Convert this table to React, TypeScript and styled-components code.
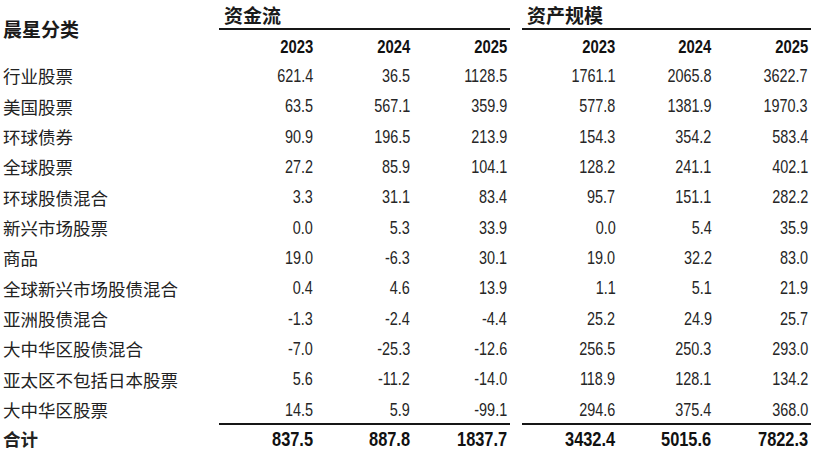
import React from "react";
import styled, { createGlobalStyle } from "styled-components";

const GlobalStyle = createGlobalStyle`
  html, body { margin: 0; padding: 0; background: #ffffff; }
  body { width: 815px; height: 463px; overflow: hidden; }
`;

const COLS = "219px repeat(3, 97px) 12px repeat(3, 96.3px)";
const NUM_FONT = `"Liberation Sans", Arial, sans-serif`;
const CJK_FONT = `"Noto Sans CJK SC", "Noto Sans", sans-serif`;

const Table = styled.div`
  display: flex;
  flex-direction: column;
  width: 815px;
  color: #161616;
`;

const Header = styled.div`
  display: grid;
  grid-template-columns: ${COLS};
  grid-template-rows: 30px 31px;
`;

const CornerTitle = styled.div`
  grid-row: 1 / 3;
  grid-column: 1;
  align-self: center;
  padding: 0 0 5px 3px;
  font-family: ${CJK_FONT};
  font-weight: 700;
  font-size: 19px;
  line-height: 1;
  color: #1a1a1a;
`;

const GroupTitle = styled.div<{ $col: string }>`
  grid-row: 1;
  grid-column: ${(p) => p.$col};
  display: flex;
  align-items: center;
  padding-left: 5px;
  border-bottom: 2px solid #161616;
  font-family: ${CJK_FONT};
  font-weight: 700;
  font-size: 19px;
  line-height: 1;
  color: #1a1a1a;
`;

const YearCell = styled.div<{ $col: number }>`
  grid-row: 2;
  grid-column: ${(p) => p.$col};
  display: flex;
  align-items: center;
  justify-content: flex-end;
  padding: 2px 3px 0 0;
  font-family: ${NUM_FONT};
  font-weight: 700;
  font-size: 19px;
  color: #111;
`;

const Narrow = styled.span<{ $scale?: number }>`
  display: inline-block;
  transform: scaleX(${(p) => p.$scale ?? 0.78});
  transform-origin: right center;
  white-space: nowrap;
`;

const Row = styled.div<{ $total?: boolean }>`
  display: grid;
  grid-template-columns: ${COLS};
  height: ${(p) => (p.$total ? "30px" : "30.33px")};
  margin-top: ${(p) => (p.$total ? "-2px" : "0")};
`;

const Label = styled.div<{ $bold?: boolean }>`
  grid-column: 1;
  display: flex;
  align-items: center;
  padding-left: 3px;
  padding-top: ${(p) => (p.$bold ? "2px" : "0")};
  font-family: ${CJK_FONT};
  font-weight: ${(p) => (p.$bold ? 700 : 400)};
  font-size: 17.5px;
  line-height: 1;
  color: #222;
  white-space: nowrap;
`;

const Num = styled.div<{ $bold?: boolean; $line?: boolean; $col: number }>`
  grid-column: ${(p) => p.$col};
  display: flex;
  align-items: center;
  justify-content: flex-end;
  padding-right: 3px;
  padding-top: ${(p) => (p.$line ? "2px" : "0")};
  border-top: ${(p) => (p.$line ? "2px solid #161616" : "none")};
  font-family: ${NUM_FONT};
  font-weight: ${(p) => (p.$bold ? 700 : 400)};
  font-size: ${(p) => (p.$bold ? "20px" : "18.5px")};
  color: ${(p) => (p.$bold ? "#111" : "#262626")};
`;

const rows: [string, string[]][] = [
  ["行业股票", ["621.4", "36.5", "1128.5", "1761.1", "2065.8", "3622.7"]],
  ["美国股票", ["63.5", "567.1", "359.9", "577.8", "1381.9", "1970.3"]],
  ["环球债券", ["90.9", "196.5", "213.9", "154.3", "354.2", "583.4"]],
  ["全球股票", ["27.2", "85.9", "104.1", "128.2", "241.1", "402.1"]],
  ["环球股债混合", ["3.3", "31.1", "83.4", "95.7", "151.1", "282.2"]],
  ["新兴市场股票", ["0.0", "5.3", "33.9", "0.0", "5.4", "35.9"]],
  ["商品", ["19.0", "-6.3", "30.1", "19.0", "32.2", "83.0"]],
  ["全球新兴市场股债混合", ["0.4", "4.6", "13.9", "1.1", "5.1", "21.9"]],
  ["亚洲股债混合", ["-1.3", "-2.4", "-4.4", "25.2", "24.9", "25.7"]],
  ["大中华区股债混合", ["-7.0", "-25.3", "-12.6", "256.5", "250.3", "293.0"]],
  ["亚太区不包括日本股票", ["5.6", "-11.2", "-14.0", "118.9", "128.1", "134.2"]],
  ["大中华区股票", ["14.5", "5.9", "-99.1", "294.6", "375.4", "368.0"]],
];

const totals = ["837.5", "887.8", "1837.7", "3432.4", "5015.6", "7822.3"];
const years = ["2023", "2024", "2025"];
const colFor = (i: number) => (i < 3 ? i + 2 : i + 3);

export default function App() {
  return (
    <>
      <GlobalStyle />
      <Table>
        <Header>
          <CornerTitle>晨星分类</CornerTitle>
          <GroupTitle $col="2 / 5">资金流</GroupTitle>
          <GroupTitle $col="6 / 9">资产规模</GroupTitle>
          {[...years, ...years].map((y, i) => (
            <YearCell key={i} $col={colFor(i)}>
              <Narrow>{y}</Narrow>
            </YearCell>
          ))}
        </Header>
        {rows.map(([label, vals]) => (
          <Row key={label}>
            <Label>{label}</Label>
            {vals.map((v, i) => (
              <Num key={i} $col={colFor(i)}>
                <Narrow>{v}</Narrow>
              </Num>
            ))}
          </Row>
        ))}
        <Row $total>
          <Label $bold>合计</Label>
          {totals.map((v, i) => (
            <Num key={i} $col={colFor(i)} $bold $line>
              <Narrow $scale={0.82}>{v}</Narrow>
            </Num>
          ))}
        </Row>
      </Table>
    </>
  );
}
